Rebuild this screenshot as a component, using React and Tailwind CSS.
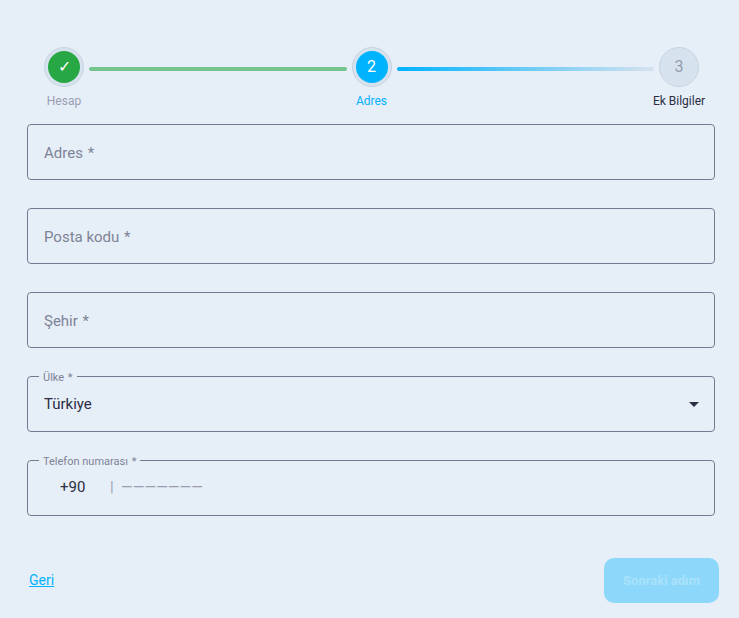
import { useState } from "react";

const STEPS = [
  { label: "Hesap", mark: "✓", circle: "bg-[#28a745] text-white", text: "text-[#9a9eb0]" },
  { label: "Adres", mark: "2", circle: "bg-[#00b3ff] text-white", text: "text-[#00b3ff]" },
  { label: "Ek Bilgiler", mark: "3", circle: "text-[#969bae]", text: "text-[#2b2d42]" },
];

const LINES = ["bg-[#76c48d]", "bg-linear-to-r/srgb from-[#00b3ff] to-[#d6e2ee]"];

function Stepper() {
  return (
    <ol className="flex items-start pr-4 pl-[17px]">
      {STEPS.map((step, i) => (
        <li key={step.label} className={i < 2 ? "flex flex-1" : "flex"}>
          <div className="flex w-10 shrink-0 flex-col items-center gap-1.5">
            <div className="flex h-10 w-10 items-center justify-center rounded-full border border-[#c8d4e0] bg-[#d6e2ee]">
              <span
                className={`flex h-8 w-8 items-center justify-center rounded-full text-base ${step.circle}`}
              >
                {step.mark}
              </span>
            </div>
            <span className={`text-xs leading-4 whitespace-nowrap ${step.text}`}>
              {step.label}
            </span>
          </div>
          {i < 2 && <div className={`mx-[5px] mt-5 h-1 flex-1 rounded-full ${LINES[i]}`} />}
        </li>
      ))}
    </ol>
  );
}

function TextField({ id, label }) {
  return (
    <div className="relative h-14 rounded border border-[#747a90]">
      <input
        id={id}
        type="text"
        required
        placeholder=" "
        className="peer h-full w-full bg-transparent px-4 text-[15px] text-[#2b2d42] outline-none"
      />
      <label
        htmlFor={id}
        className="pointer-events-none absolute top-[18px] left-3 bg-[#e6eef8] px-1 text-[15px] leading-5 text-[#7e8396] peer-focus:-top-[7px] peer-focus:text-[11px] peer-focus:leading-4 peer-[:not(:placeholder-shown)]:-top-[7px] peer-[:not(:placeholder-shown)]:text-[11px]"
      >
        {label} <span className="ml-px">*</span>
      </label>
    </div>
  );
}

function FloatingLabel({ htmlFor, children }) {
  return (
    <label
      htmlFor={htmlFor}
      className="absolute -top-[7px] left-[11px] bg-[#e6eef8] px-1 text-[11px] leading-4 text-[#7e8396]"
    >
      {children} <span className="ml-px">*</span>
    </label>
  );
}

export default function App() {
  const [country, setCountry] = useState("TR");

  return (
    <main className="min-h-screen bg-[#e6eef8] px-6 pt-[47px] pb-[15px] font-['Roboto',sans-serif] text-[#2b2d42]">
      <form className="ml-[3px]" onSubmit={(e) => e.preventDefault()}>
        <Stepper />

        <div className="mt-[15px] flex flex-col gap-7">
          <TextField id="address" label="Adres" />
          <TextField id="postal" label="Posta kodu" />
          <TextField id="city" label="Şehir" />

          {/* Country */}
          <div className="relative h-14 rounded border border-[#747a90]">
            <FloatingLabel htmlFor="country">Ülke</FloatingLabel>
            <select
              id="country"
              value={country}
              onChange={(e) => setCountry(e.target.value)}
              className="h-full w-full appearance-none bg-transparent px-4 text-[15px] outline-none"
            >
              <option value="TR">Türkiye</option>
            </select>
            <svg
              viewBox="0 0 10 5"
              className="pointer-events-none absolute top-[25px] right-[15px] h-[5px] w-2.5"
              fill="#2b2d42"
            >
              <path d="M0 0h10L5 5z" />
            </svg>
          </div>

          {/* Phone with dial code */}
          <div className="relative flex h-14 items-center rounded border border-[#747a90] pr-4 pb-0.5 pl-8 text-[15px]">
            <FloatingLabel htmlFor="phone">Telefon numarası</FloatingLabel>
            <input
              type="text"
              defaultValue="+90"
              aria-label="Ülke kodu"
              className="w-[50px] bg-transparent outline-none"
            />
            <span className="w-[11px] text-[#9a9eb0]">|</span>
            <input
              id="phone"
              type="tel"
              placeholder="———————"
              className="min-w-0 flex-1 bg-transparent outline-none placeholder:text-[#9a9eb0]"
            />
          </div>
        </div>

        <div className="mt-[42px] -mr-1 flex items-center justify-between pl-0.5">
          <a href="#" className="pb-0.5 text-sm text-[#00b3ff] underline">
            Geri
          </a>
          <button
            type="submit"
            disabled
            className="h-[45px] w-[115px] rounded-[10px] bg-[#8dd8fa] text-[13px] font-bold text-[#aae2fb]"
          >
            Sonraki adım
          </button>
        </div>
      </form>
    </main>
  );
}
